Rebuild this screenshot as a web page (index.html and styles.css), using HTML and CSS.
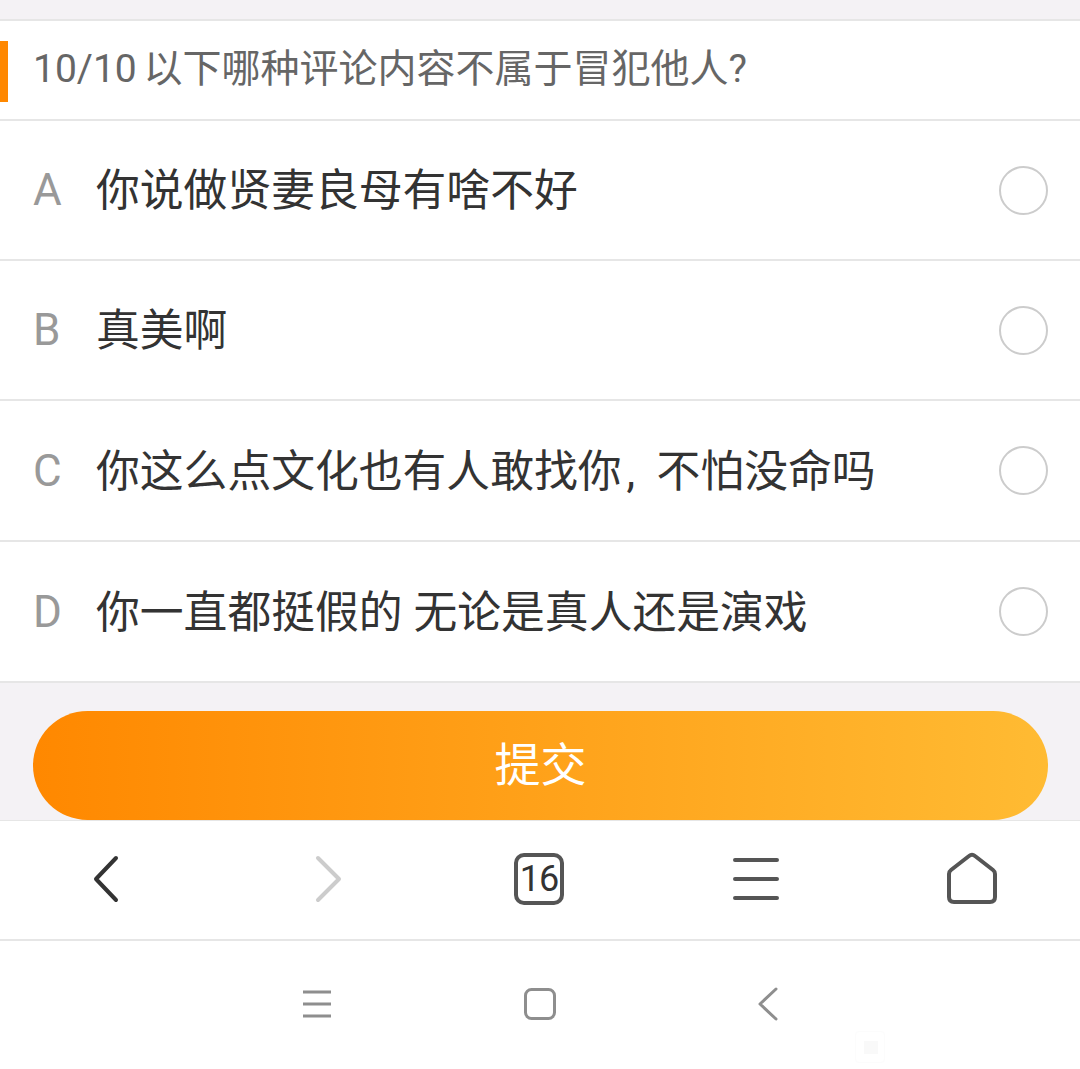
FILE: index.html
```html
<!DOCTYPE html>
<html lang="zh-CN">
<head>
  <meta charset="UTF-8" />
  <meta name="viewport" content="width=device-width, initial-scale=1.0" />
  <title>答题</title>
  <link rel="stylesheet" href="styles.css">
</head>
<body>
  <div class="top-gap"></div>

  <div class="question">
    <span class="question-mark"></span>
    <p>10/10 以下哪种评论内容不属于冒犯他人?</p>
  </div>

  <ul class="options">
    <li class="option"><span class="letter">A</span><span class="text">你说做贤妻良母有啥不好</span><span class="radio"></span></li>
    <li class="option"><span class="letter">B</span><span class="text">真美啊</span><span class="radio"></span></li>
    <li class="option"><span class="letter">C</span><span class="text">你这么点文化也有人敢找你<span class="comma">,</span>不怕没命吗</span><span class="radio"></span></li>
    <li class="option"><span class="letter">D</span><span class="text">你一直都挺假的 无论是真人还是演戏</span><span class="radio"></span></li>
  </ul>

  <div class="submit-wrap">
    <div class="submit"><span>提交</span></div>
  </div>

  <nav class="toolbar">
    <svg class="tool" width="120" height="60" viewBox="0 0 120 60">
      <path d="M70 9 L50 30 L70 51" fill="none" stroke="#333" stroke-width="4" stroke-linecap="round" stroke-linejoin="round" />
    </svg>
    <svg class="tool" width="120" height="60" viewBox="0 0 120 60">
      <path d="M55 9 L76 30 L55 51" fill="none" stroke="#ccc" stroke-width="4" stroke-linecap="round" stroke-linejoin="round" />
    </svg>
    <div class="tool tabs"><span>16</span></div>
    <svg class="tool" width="120" height="60" viewBox="0 0 120 60">
      <path d="M39 11 H81 M39 30 H81 M39 49 H81" fill="none" stroke="#555" stroke-width="4" stroke-linecap="round" />
    </svg>
    <svg class="tool" width="120" height="60" viewBox="0 0 120 60">
      <path d="M37 25 Q37 22.500 39 21 L57 7 Q60 4.500 63 7 L81 21 Q83 22.500 83 25 V48 Q83 53 78 53 H42 Q37 53 37 48 Z" fill="none" stroke="#555" stroke-width="4" stroke-linejoin="round" />
    </svg>
  </nav>

  <div class="system-nav">
    <svg class="sys sys-menu" width="32" height="28" viewBox="0 0 32 28">
      <path d="M2 2 H30 M2 14 H30 M2 26 H30" fill="none" stroke="#8e8e8e" stroke-width="3" />
    </svg>
    <svg class="sys sys-home" width="32" height="32" viewBox="0 0 32 32">
      <rect x="1.500" y="1.500" width="29" height="29" rx="6" fill="none" stroke="#8e8e8e" stroke-width="3" />
    </svg>
    <svg class="sys sys-back" width="20" height="34" viewBox="0 0 20 34">
      <path d="M18 2 L2 17 L18 32" fill="none" stroke="#8e8e8e" stroke-width="3" stroke-linecap="round" stroke-linejoin="round" />
    </svg>
    <span class="ghost"></span>
  </div>
</body>
</html>
```

FILE: styles.css
```css
* {
  margin: 0;
  padding: 0;
  box-sizing: border-box;
}

body {
  width: 1080px;
  height: 1069px;
  overflow: hidden;
  background: #fff;
  font-family: "Roboto", "Noto Sans CJK SC", sans-serif;
}

.top-gap {
  height: 19px;
  background: #f4f2f5;
}

.question {
  height: 102px;
  display: flex;
  align-items: center;
  background: #fff;
  border-top: 2px solid #e6e6e6;
  border-bottom: 2px solid #e6e6e6;
}

.question-mark {
  width: 8px;
  height: 61px;
  margin-top: 2px;
  background: #ff8800;
}

.question p {
  margin-left: 25px;
  padding-bottom: 10px;
  font-size: 39px;
  word-spacing: -3px;
  color: #666;
  white-space: nowrap;
}

.options {
  list-style: none;
}

.option {
  height: 140px;
  display: flex;
  align-items: center;
  padding: 0 32px 0 33px;
  border-bottom: 2px solid #e6e6e6;
}

.option:nth-child(n+3) {
  height: 141px;
}

.letter {
  width: 63px;
  font-size: 44px;
  color: #999;
}

.text {
  flex: 1;
  padding-bottom: 6px;
  font-size: 43.800px;
  color: #333;
  white-space: nowrap;
}

.comma {
  display: inline-block;
  width: 35px;
  padding-left: 5px;
}

.radio {
  width: 49px;
  height: 49px;
  border: 2px solid #ccc;
  border-radius: 50%;
}

.submit-wrap {
  height: 138px;
  padding: 28px 32px 0 33px;
  overflow: hidden;
  background: #f4f2f5;
  border-bottom: 1px solid #e6e6e6;
}

.submit {
  height: 109px;
  display: flex;
  align-items: center;
  justify-content: center;
  border-radius: 55px;
  background: linear-gradient(to right, #ff8800, #ffbb33);
  font-size: 46px;
  color: #fff;
}

.submit span {
  padding-bottom: 10px;
}

.toolbar {
  height: 120px;
  display: flex;
  align-items: center;
  justify-content: space-between;
  padding: 0 48px 3px 46px;
  border-bottom: 2px solid #e6e6e6;
}

.tool {
  display: block;
  width: 120px;
  height: 60px;
}

.tabs {
  display: flex;
  align-items: center;
  justify-content: center;
}

.tabs span {
  width: 50px;
  height: 52px;
  display: flex;
  align-items: center;
  justify-content: center;
  border: 4px solid #555;
  border-radius: 10px;
  font-size: 36px;
  letter-spacing: -1px;
  color: #333;
}

.system-nav {
  position: relative;
  height: 129px;
}

.sys {
  position: absolute;
}

.sys-menu {
  left: 301px;
  top: 49px;
}

.sys-home {
  left: 524px;
  top: 47px;
}

.sys-back {
  left: 758px;
  top: 46px;
}

.ghost {
  position: absolute;
  left: 855px;
  top: 90px;
  width: 30px;
  height: 32px;
  border: 1px solid #fcfcfc;
  border-radius: 4px;
}

.ghost::after {
  content: "";
  position: absolute;
  left: 8px;
  top: 9px;
  width: 14px;
  height: 13px;
  background: #f9f9f9;
}
```
